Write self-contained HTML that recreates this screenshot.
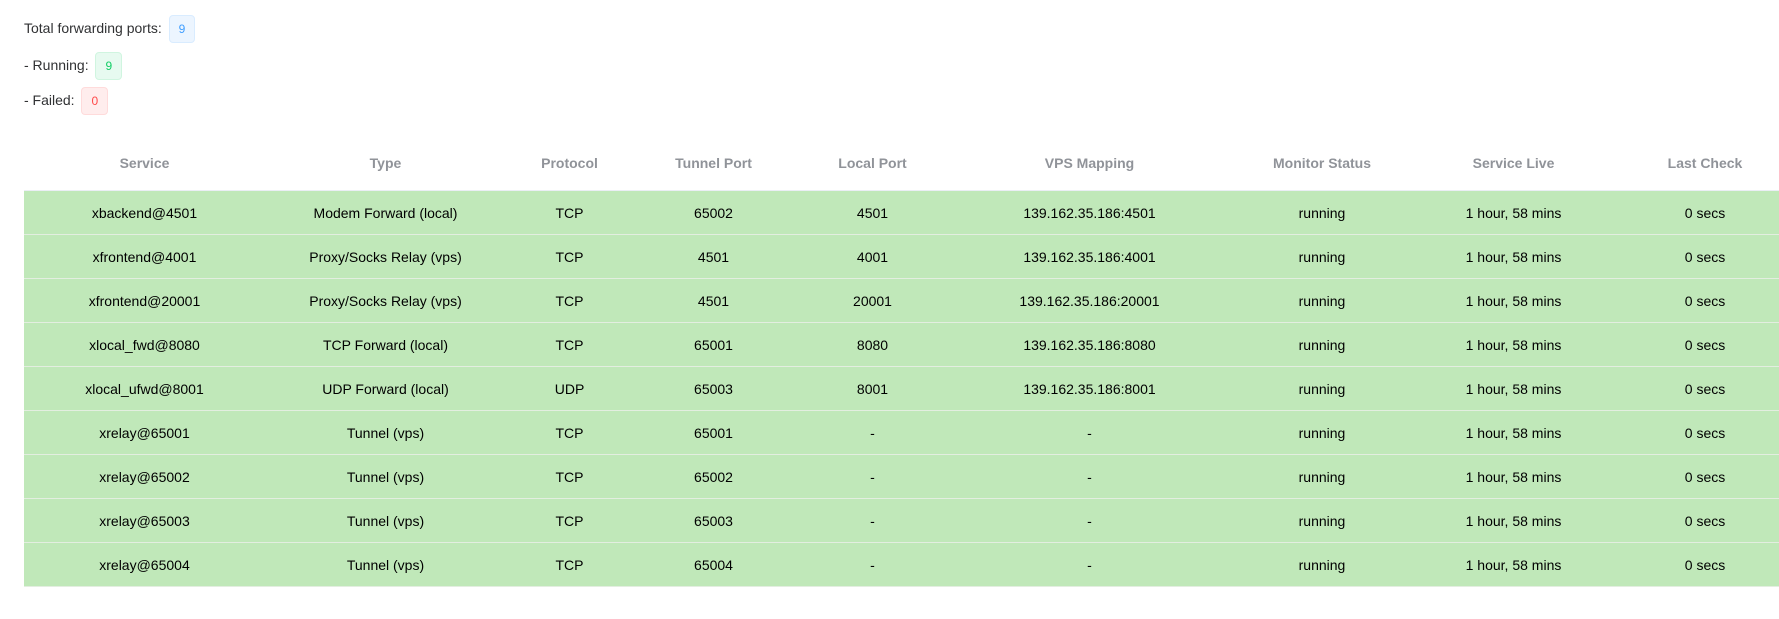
<!DOCTYPE html>
<html><head><meta charset="utf-8"><style>
body{margin:0;background:#fff;font-family:"Liberation Sans",Arial,sans-serif;font-size:14px;color:#303133;}
.line{position:absolute;left:24px;height:28px;line-height:28px;}
.b{display:inline-block;box-sizing:border-box;height:28px;line-height:26px;padding:0 9px;border-radius:4px;font-size:12px;border:1px solid;vertical-align:middle;margin-left:3px;}
.bl{background:#ecf5ff;border-color:#d9ecff;color:#409eff}
.bg{background:#e7faf0;border-color:#d0f5e0;color:#13ce66}
.br{background:#ffeded;border-color:#ffdbdb;color:#ff4949}
.wrap{position:absolute;left:24px;top:136px;width:1755px;overflow:hidden;}
table{border-collapse:collapse;table-layout:fixed;width:1775px;}
th{height:54px;color:#909399;font-weight:bold;text-align:center;padding:0;border-bottom:1px solid #ebeef5;}
td{height:43px;background:#c0e8b9;color:#000;text-align:center;padding:0;border-bottom:1px solid #e3eee0;}
</style></head><body>
<div class="line" style="top:14px">Total forwarding ports: <span class="b bl">9</span></div>
<div class="line" style="top:51px">- Running: <span class="b bg">9</span></div>
<div class="line" style="top:86px">- Failed: <span class="b br">0</span></div>
<div class="wrap"><table>
<colgroup><col style="width:241px"><col style="width:241px"><col style="width:127px"><col style="width:161px"><col style="width:157px"><col style="width:277px"><col style="width:188px"><col style="width:195px"><col style="width:188px"></colgroup>
<tr><th>Service</th><th>Type</th><th>Protocol</th><th>Tunnel Port</th><th>Local Port</th><th>VPS Mapping</th><th>Monitor Status</th><th>Service Live</th><th>Last Check</th></tr>
<tr><td>xbackend@4501</td><td>Modem Forward (local)</td><td>TCP</td><td>65002</td><td>4501</td><td>139.162.35.186:4501</td><td>running</td><td>1 hour, 58 mins</td><td>0 secs</td></tr>
<tr><td>xfrontend@4001</td><td>Proxy/Socks Relay (vps)</td><td>TCP</td><td>4501</td><td>4001</td><td>139.162.35.186:4001</td><td>running</td><td>1 hour, 58 mins</td><td>0 secs</td></tr>
<tr><td>xfrontend@20001</td><td>Proxy/Socks Relay (vps)</td><td>TCP</td><td>4501</td><td>20001</td><td>139.162.35.186:20001</td><td>running</td><td>1 hour, 58 mins</td><td>0 secs</td></tr>
<tr><td>xlocal_fwd@8080</td><td>TCP Forward (local)</td><td>TCP</td><td>65001</td><td>8080</td><td>139.162.35.186:8080</td><td>running</td><td>1 hour, 58 mins</td><td>0 secs</td></tr>
<tr><td>xlocal_ufwd@8001</td><td>UDP Forward (local)</td><td>UDP</td><td>65003</td><td>8001</td><td>139.162.35.186:8001</td><td>running</td><td>1 hour, 58 mins</td><td>0 secs</td></tr>
<tr><td>xrelay@65001</td><td>Tunnel (vps)</td><td>TCP</td><td>65001</td><td>-</td><td>-</td><td>running</td><td>1 hour, 58 mins</td><td>0 secs</td></tr>
<tr><td>xrelay@65002</td><td>Tunnel (vps)</td><td>TCP</td><td>65002</td><td>-</td><td>-</td><td>running</td><td>1 hour, 58 mins</td><td>0 secs</td></tr>
<tr><td>xrelay@65003</td><td>Tunnel (vps)</td><td>TCP</td><td>65003</td><td>-</td><td>-</td><td>running</td><td>1 hour, 58 mins</td><td>0 secs</td></tr>
<tr><td>xrelay@65004</td><td>Tunnel (vps)</td><td>TCP</td><td>65004</td><td>-</td><td>-</td><td>running</td><td>1 hour, 58 mins</td><td>0 secs</td></tr>
</table></div>
</body></html>
